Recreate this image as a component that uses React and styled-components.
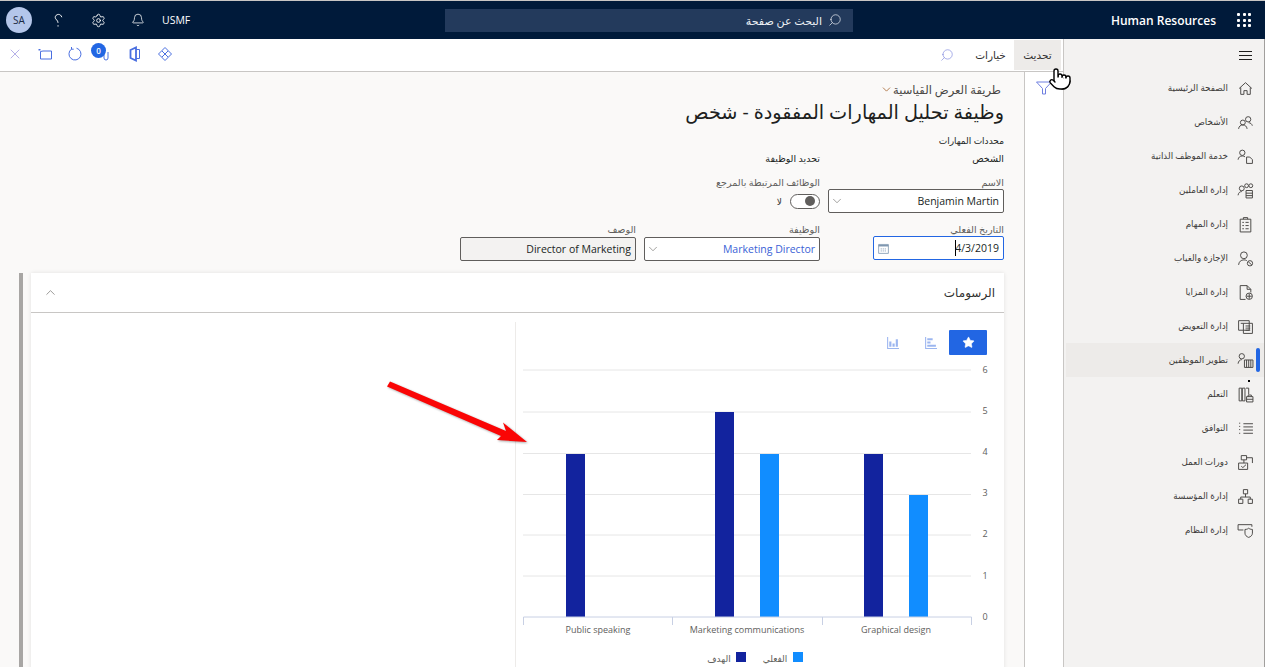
import React from 'react'
import styled, { createGlobalStyle } from 'styled-components'
import { Pointer, ChevronDown, ChevronUp, Bell, Settings, X, Search, Star } from 'lucide-react'

const FONT = `"Open Sans", "DejaVu Sans", sans-serif`

const Global = createGlobalStyle`
  html, body { margin: 0; padding: 0; height: 667px; overflow: hidden; background: #faf9f8; }
  * { box-sizing: border-box; }
  body { font-family: ${FONT}; color: #323130; }
`

const Page = styled.div`
  position: relative;
  width: 1265px;
  height: 667px;
  overflow: hidden;
  display: flex;
  flex-direction: column;
  border-top: 1px solid #c8c6c4;
`

const TopBar = styled.header`
  height: 38px;
  flex: none;
  background: #001a3a;
  color: #fff;
  display: grid;
  grid-template-columns: 412px 408px 1fr;
  align-items: center;
`

const Brand = styled.div`
  display: flex;
  align-items: center;
  gap: 21px;
  padding-right: 14px;
  font-size: 12px;
  font-weight: 600;
  direction: rtl;
`

const Dots = styled.div`
  width: 14px;
  height: 14px;
  display: grid;
  grid-template-columns: repeat(3, 3px);
  grid-auto-rows: 3px;
  justify-content: space-between;
  align-content: space-between;
  span { background: #fff; border-radius: 1px; }
`

const SearchBox = styled.div`
  height: 23px;
  background: #233a5c;
  display: flex;
  align-items: center;
  gap: 6px;
  padding-right: 11px;
  font-size: 11px;
  color: #eef1f6;
`

const MirrorSearch = styled(Search)`
  transform: scaleX(-1);
`

const TopTools = styled.div`
  display: flex;
  align-items: center;
  justify-content: flex-end;
  padding-left: 6px;
`

const Company = styled.span`
  font-size: 10.5px;
  font-weight: 500;
  margin-left: 4px;
  margin-right: 60px;
`

const TopIcon = styled.span`
  width: 40px;
  display: flex;
  justify-content: center;
`

const Avatar = styled.span`
  width: 26px;
  height: 26px;
  margin-right: 6px;
  border-radius: 50%;
  background: #b4c6ea;
  color: #1b2a44;
  font-size: 10px;
  display: flex;
  align-items: center;
  justify-content: center;
`

const Body = styled.div`
  flex: 1;
  min-height: 0;
  display: flex;
`

const SideNav = styled.nav`
  width: 202px;
  flex: none;
  background: #f3f2f1;
  border-left: 1px solid #c8c6c4;
  border-right: 1px solid #a19f9d;
`

const Burger = styled.div`
  height: 32px;
  display: flex;
  flex-direction: column;
  justify-content: center;
  gap: 3px;
  padding-right: 12px;
  span { display: block; width: 13px; height: 1px; background: #201f1e; }
`

const NavItem = styled.div`
  position: relative;
  height: 34px;
  margin-left: 2px;
  display: flex;
  align-items: center;
  gap: 9px;
  padding-right: 10px;
  font-size: 8.8px;
  color: #3b3a39;
  background: ${p => (p.$active ? '#edebe9' : 'transparent')};
  svg { width: 17px; height: 17px; flex: none; }
`

const ActiveBar = styled.span`
  position: absolute;
  right: 4px;
  top: 5px;
  width: 4px;
  height: 24px;
  border-radius: 2px;
  background: #2266e3;
`

const Stray = styled.span`
  position: absolute;
  left: 182px;
  bottom: -5px;
  width: 2px;
  height: 2px;
  background: #000;
`

const Main = styled.div`
  flex: 1;
  min-width: 0;
  display: flex;
  flex-direction: column;
`

const ActionBar = styled.div`
  height: 33px;
  flex: none;
  background: #fff;
  border-bottom: 1px solid #c8c6c4;
  display: flex;
  align-items: center;
  padding-right: 2px;
  font-size: 10.5px;
`

const ActionButton = styled.button`
  height: 30px;
  width: ${p => p.$w}px;
  border: 0;
  padding: 0;
  background: ${p => (p.$on ? '#edebe9' : 'transparent')};
  font: inherit;
  color: #323130;
`

const SearchAction = styled.span`
  display: flex;
  margin-right: 13px;
  color: #7a83dc;
`

const ActionIcons = styled.div`
  margin-right: auto;
  display: flex;
  align-self: flex-start;
  color: #4a6fe0;
`

const ActionIcon = styled.span`
  position: relative;
  width: 30px;
  height: 30px;
  display: flex;
  align-items: center;
  justify-content: center;
  color: ${p => p.$tint || 'inherit'};
  svg { width: 16px; height: 16px; }
`

const Badge = styled.span`
  position: absolute;
  top: 4px;
  left: 1px;
  width: 15px;
  height: 15px;
  border-radius: 50%;
  background: #2266e3;
  color: #fff;
  font-size: 8px;
  font-weight: 600;
  display: flex;
  align-items: center;
  justify-content: center;
`

const Work = styled.div`
  flex: 1;
  min-height: 0;
  display: flex;
`

const FilterStrip = styled.div`
  width: 39px;
  flex: none;
  background: #fff;
  border-left: 1px solid #c8c6c4;
  display: flex;
  justify-content: center;
  padding-top: 8px;
  color: #6f7fe0;
`

const Content = styled.main`
  flex: 1;
  min-width: 0;
  padding: 10px 20px 0 0;
  background: #faf9f8;
`

const Caption = styled.div`
  display: flex;
  align-items: center;
  gap: 0;
  height: 14px;
  padding-right: 3px;
  font-size: 11.5px;
  color: #484644;
  svg { color: #a4622c; }
`

const Title = styled.h1`
  margin: 3px 0 0;
  height: 26px;
  line-height: 26px;
  font-size: 19.25px;
  font-weight: 400;
  color: #201f1e;
`

const Section = styled.div`
  margin-top: 9px;
  height: 14px;
  line-height: 14px;
  font-size: 9px;
  color: #201f1e;
`

const FormGrid = styled.div`
  margin-top: 4px;
  display: grid;
  grid-template-columns: repeat(3, 176px);
  column-gap: 8px;
  row-gap: 10px;
`

const GroupHead = styled.div`
  grid-column: ${p => p.$col};
  height: 14px;
  line-height: 14px;
  font-size: 9.5px;
  color: #201f1e;
`

const Field = styled.div`
  grid-column: ${p => p.$col};
`

const Label = styled.div`
  height: ${p => (p.$tall ? 14 : 13)}px;
  line-height: 13px;
  font-size: 9.6px;
  color: #605e5c;
`

const Input = styled.div`
  height: 24px;
  width: ${p => p.$w || '100%'};
  border: 1px solid ${p => (p.$focus ? '#2266e3' : '#605e5c')};
  border-radius: 2px;
  background: ${p => (p.$ro ? '#f3f2f1' : '#fff')};
  display: flex;
  align-items: center;
  justify-content: space-between;
  padding: 0 4px 0 1px;
  direction: rtl;
  font-size: 10.5px;
  color: ${p => (p.$link ? '#3a5fd6' : '#201f1e')};
  svg.cal { color: #7f97b0; margin-left: 2px; }
`

const Caret = styled.span`
  display: inline-block;
  width: 1px;
  height: 16px;
  background: #000;
  margin-right: -1px;
`

const DateText = styled.span`
  direction: ltr;
  display: flex;
  align-items: center;
`

const ToggleRow = styled.div`
  height: 24px;
  display: flex;
  align-items: center;
  gap: 8px;
  font-size: 9px;
`

const Toggle = styled.span`
  width: 30px;
  height: 15px;
  border: 1px solid #605e5c;
  border-radius: 8px;
  background: #fff;
  display: flex;
  align-items: center;
  justify-content: flex-start;
  padding: 0 3px;
  i { width: 10px; height: 10px; border-radius: 50%; background: #605e5c; margin-right: 1px; }
`

const CardRow = styled.div`
  margin-top: 12px;
  display: flex;
  gap: 8px;
  height: 400px;
`

const ScrollThumb = styled.div`
  width: 4px;
  flex: none;
  background: #a8a6a4;
`

const Card = styled.section`
  width: 973px;
  flex: none;
  background: #fff;
  box-shadow: 0 0 4px rgba(0, 0, 0, .1);
`

const CardHead = styled.div`
  height: 40px;
  border-bottom: 1px solid #c8c6c4;
  display: flex;
  align-items: center;
  justify-content: space-between;
  padding: 0 9px 0 12px;
  font-size: 12px;
  color: #323130;
  svg { color: #605e5c; }
`

const CardBody = styled.div`
  display: flex;
  padding-top: 9px;
`

const ChartPanel = styled.div`
  width: 481px;
  margin-right: 8px;
  padding-top: 8px;
  border-left: 1px solid #edebe9;
`

const ChartTools = styled.div`
  height: 25px;
  display: flex;
  padding-right: 9px;
`

const ChartTool = styled.span`
  width: 38px;
  height: 25px;
  display: flex;
  align-items: center;
  justify-content: center;
  background: ${p => (p.$on ? '#2266e3' : 'transparent')};
  color: ${p => (p.$on ? '#fff' : '#5c86e6')};
  border-radius: 1px;
`

const ChartSvg = styled.svg`
  display: block;
  direction: ltr;
  font-family: ${FONT};
  font-size: 9px;
  fill: #605e5c;
`

const ArrowOverlay = styled.svg`
  position: absolute;
  left: 380px;
  top: 372px;
  filter: drop-shadow(1px 1px 1px rgba(0, 0, 0, .35));
`

const HandCursor = styled.span`
  position: absolute;
  left: 1048px;
  top: 66px;
  display: flex;
`

const LineIcon = ({ children, size = 16, className }) => (
  <svg className={className} width={size} height={size} viewBox="0 0 16 16" fill="none" stroke="currentColor" strokeWidth="1">{children}</svg>
)

const NAV = [
  { t: 'الصفحة الرئيسية', i: <><path d="M2 8 8 2.500 14 8" /><path d="M3.500 7v6.500h3V10h3v3.500h3V7" /></> },
  { t: 'الأشخاص', i: <><circle cx="10.500" cy="5" r="2.500" /><circle cx="5.500" cy="8" r="2.300" /><path d="M1.500 14c.3-2.500 2-3.700 4-3.700s3.700 1.200 4 3.700M11 8.200c1.800.1 3 1.200 3.400 2.800" /></> },
  { t: 'خدمة الموظف الذاتية', i: <><circle cx="5" cy="4.500" r="2.500" /><path d="M1 11c.3-2.200 1.800-3.500 4-3.500 1 0 1.800.3 2.500.8" /><path d="M9 8.500h3l2.500 2.500v3.500H9z" /></> },
  { t: 'إدارة العاملين', i: <><circle cx="4.500" cy="6" r="2.300" /><circle cx="9" cy="3.500" r="1.800" /><circle cx="13" cy="3.500" r="1.800" /><path d="M1 12.500c.3-2.300 1.700-3.500 3.500-3.500M8.500 8h6v7h-6zM8.500 10.500h6M8.500 12.800h6" /></> },
  { t: 'إدارة المهام', i: <><path d="M3 3h10v12H3zM6 3V1.500h4V3" /><path d="M5 6h1.500M8 6h3M5 9h1.500M8 9h3M5 12h1.500M8 12h3" /></> },
  { t: 'الإجازة والغياب', i: <><circle cx="6.500" cy="5" r="3.200" /><path d="M1.500 14c.3-3 2.200-4.700 5-4.700 1 0 2 .2 2.700.7" /><circle cx="12.200" cy="12.500" r="2.500" /><path d="m10.500 11 3.400 3" /></> },
  { t: 'إدارة المزايا', i: <><path d="M3 1.500h6.500L13 5v3M3 1.500v13h5" /><path d="M9.500 1.500V5H13" /><circle cx="11.500" cy="11.500" r="3" /><path d="M9 11.500h5M11.500 9v5" /></> },
  { t: 'إدارة التعويض', i: <><path d="M1.500 2.500h10v9h-10zM6 5h8.500v9.500H6z" /><path d="M8 7.500h4.500M8 9.500h4.500M8 11.500h4.500M3.500 5H6" /></> },
  { t: 'تطوير الموظفين', active: true, i: <><circle cx="4.500" cy="4" r="2.500" /><path d="M1 11c.3-2.300 1.700-3.800 3.500-3.800" /><path d="M7 7.500h8v7H7zM9 7.500v7M11 7.500v7M13 7.500v7" /></> },
  { t: 'التعلم', i: <><path d="M2 2h2.500v12H2zM5 2h2.500v12H5zM8.500 2h2.500v6" /><path d="M9 10h6v5H9zM9 12.500h6M10.500 10V8.500h3V10" /></> },
  { t: 'التوافق', i: <><path d="M6 3.500h9M6 6.500h9M6 9.500h9M6 12.500h9" /><path d="M2 3h2M2 6h2M2 9h2M2 12.500h2" strokeDasharray="1 1" /></> },
  { t: 'دورات العمل', i: <><path d="M1.500 8.500h8.500v6H1.500zM4 5.500h5V1.500H4zM6.500 5.500v3M9 3.500h5.500v5" /><path d="m4 11.500 1.500 1.300L8.500 10" /></> },
  { t: 'إدارة المؤسسة', i: <><path d="M6 1.500h4v4H6zM1.500 10.500h4v4h-4zM10.500 10.500h4v4h-4z" /><path d="M8 5.500v3M3.500 10.500v-2h9v2" /></> },
  { t: 'إدارة النظام', i: <><path d="M1 2.500h13v2M1 2.500v5h5" /><path d="M7.500 7c1.800 0 3-.6 3.500-1.200.6.6 1.800 1.200 3.500 1.200v3.500c0 2-1.500 3.300-3.500 4-2-.7-3.500-2-3.500-4z" /></> },
]

const GRID_YS = [370, 412, 453.5, 494.5, 535, 576]
const BARS = [
  { x: 566, y: 454, c: '#12239e' },
  { x: 715, y: 412, c: '#12239e' },
  { x: 760, y: 454, c: '#118dff' },
  { x: 864, y: 454, c: '#12239e' },
  { x: 909, y: 495, c: '#118dff' },
]
const LABELS = [[598, 'Public speaking'], [747, 'Marketing communications'], [896, 'Graphical design']]

export default function App() {
  return (
    <Page dir="rtl">
      <Global />
      <TopBar>
        <Brand>
          <Dots>{Array.from({ length: 9 }, (_, i) => <span key={i} />)}</Dots>
          <span>Human Resources</span>
        </Brand>
        <SearchBox>
          <MirrorSearch size={14} strokeWidth={1.2} />
          <span>البحث عن صفحة</span>
        </SearchBox>
        <TopTools>
          <Company>USMF</Company>
          <TopIcon><Bell size={14} strokeWidth={1.3} /></TopIcon>
          <TopIcon><Settings size={15} strokeWidth={1.4} /></TopIcon>
          <TopIcon>
            <LineIcon size={15}>
              <path d="M11.500 4.500C11 2.500 9.500 1.500 8 1.500 6 1.500 4.500 3 4.500 4.700c0 2.300 3 2.800 3 5.800" />
              <path d="M7.500 13v1.500" />
            </LineIcon>
          </TopIcon>
          <Avatar>SA</Avatar>
        </TopTools>
      </TopBar>

      <Body>
        <SideNav>
          <Burger><span /><span /><span /></Burger>
          <div>
            {NAV.map(n => (
              <NavItem key={n.t} $active={n.active}>
                <svg viewBox="0 0 16 16" fill="none" stroke="#484644" strokeWidth=".9">{n.i}</svg>
                <span>{n.t}</span>
                {n.active && <ActiveBar />}
                {n.active && <Stray />}
              </NavItem>
            ))}
          </div>
        </SideNav>

        <Main>
          <ActionBar>
            <ActionButton $w={47} $on>تحديث</ActionButton>
            <ActionButton $w={47}>خيارات</ActionButton>
            <SearchAction><MirrorSearch size={14} strokeWidth={1.1} /></SearchAction>
            <ActionIcons>
              <ActionIcon>
                <LineIcon><path d="M8 1.500 14.500 8 8 14.500 1.500 8zM5 5l6 6M11 5l-6 6" /></LineIcon>
              </ActionIcon>
              <ActionIcon>
                <LineIcon>
                  <path d="M3.500 4 9 1.500v13L3.500 12z" strokeWidth="1.800" />
                  <path d="M9 3.500h3.500v9H9" />
                </LineIcon>
              </ActionIcon>
              <ActionIcon>
                <LineIcon><path d="M11 6v6a2 2 0 0 1-4 0V5" /></LineIcon>
                <Badge>0</Badge>
              </ActionIcon>
              <ActionIcon>
                <LineIcon>
                  <path d="M9.500 2.200A6 6 0 1 1 4.500 3.100" />
                  <path d="M4.500 1v2.200h2.200" />
                </LineIcon>
              </ActionIcon>
              <ActionIcon>
                <LineIcon>
                  <path d="M3.500 5.500 6 5h8.500v8h-11z" />
                  <path d="M1.500 3h2v1.500h-2z" fill="currentColor" stroke="none" />
                </LineIcon>
              </ActionIcon>
              <ActionIcon $tint="#8f86dd"><X strokeWidth={1} /></ActionIcon>
            </ActionIcons>
          </ActionBar>

          <Work>
            <FilterStrip>
              <LineIcon size={16}><path d="M.500 2h15L9.500 8.500V14h-3V8.500z" /></LineIcon>
            </FilterStrip>
            <Content>
              <Caption>
                <span>طريقة العرض القياسية</span>
                <ChevronDown size={13} strokeWidth={1.5} />
              </Caption>
              <Title>وظيفة تحليل المهارات المفقودة - شخص</Title>
              <Section>محددات المهارات</Section>
              <FormGrid>
                <GroupHead $col={1}>الشخص</GroupHead>
                <GroupHead $col={2}>تحديد الوظيفة</GroupHead>
                <Field $col={1}>
                  <Label>الاسم</Label>
                  <Input>
                    <span>Benjamin Martin</span>
                    <ChevronDown size={14} strokeWidth={1} color="#605e5c" />
                  </Input>
                </Field>
                <Field $col={2}>
                  <Label>الوظائف المرتبطة بالمرجع</Label>
                  <ToggleRow>
                    <Toggle><i /></Toggle>
                    <span>لا</span>
                  </ToggleRow>
                </Field>
                <Field $col={1}>
                  <Label>التاريخ الفعلي</Label>
                  <Input $focus $w="131px">
                    <DateText><Caret />4/3/2019</DateText>
                    <LineIcon className="cal" size={13}>
                      <path d="M2 3h12v11H2z" />
                      <path d="M2 4.500h12" strokeWidth="2" />
                      <path d="M4.500 8.500h7M4.500 11h7" strokeDasharray="1.500 1" />
                    </LineIcon>
                  </Input>
                </Field>
                <Field $col={2}>
                  <Label $tall>الوظيفة</Label>
                  <Input $link>
                    <span>Marketing Director</span>
                    <ChevronDown size={14} strokeWidth={1} color="#605e5c" />
                  </Input>
                </Field>
                <Field $col={3}>
                  <Label $tall>الوصف</Label>
                  <Input $ro><span>Director of Marketing</span></Input>
                </Field>
              </FormGrid>

              <CardRow>
                <Card>
                  <CardHead>
                    <span>الرسومات</span>
                    <ChevronUp size={15} strokeWidth={1} />
                  </CardHead>
                  <CardBody>
                    <ChartPanel>
                      <ChartTools>
                        <ChartTool $on><Star size={13} fill="#fff" strokeWidth={1} /></ChartTool>
                        <ChartTool>
                          <svg width="13" height="13" viewBox="0 0 12 12" fill="currentColor" opacity=".6"><path d="M1 1h1v10h10v1H1zM3 2h5v2H3zM3 5h3v2H3zM3 8h8v2H3z" /></svg>
                        </ChartTool>
                        <ChartTool>
                          <svg width="13" height="13" viewBox="0 0 12 12" fill="currentColor" opacity=".6"><path d="M1 1h1v10h10v1H1zM3 5h2v5H3zM6 7h2v3H6zM9 3h2v7H9z" /></svg>
                        </ChartTool>
                      </ChartTools>
                      <ChartSvg width="480" height="312" viewBox="516 355 480 312">
                        {GRID_YS.map(y => <line key={y} x1="523" x2="971" y1={y} y2={y} stroke="#e6e6e6" />)}
                        {[6, 5, 4, 3, 2, 1, 0].map((v, i) => (
                          <text key={v} x="985" y={372.5 + i * 41.2} textAnchor="middle">{v}</text>
                        ))}
                        {BARS.map(b => <rect key={b.x} x={b.x} y={b.y} width="19" height={617 - b.y} fill={b.c} />)}
                        <path d="M523.500 625v-8h448v8M672.500 617v8M822.500 617v8" fill="none" stroke="#c8d0e4" />
                        {LABELS.map(([x, t]) => <text key={t} x={x} y="633" textAnchor="middle">{t}</text>)}
                        <rect x="793" y="652" width="10" height="10" fill="#118dff" />
                        <text x="775" y="662" textAnchor="middle">الفعلي</text>
                        <rect x="736" y="652" width="10" height="10" fill="#12239e" />
                        <text x="719" y="662" textAnchor="middle">الهدف</text>
                      </ChartSvg>
                    </ChartPanel>
                  </CardBody>
                </Card>
                <ScrollThumb />
              </CardRow>
            </Content>
          </Work>
        </Main>
      </Body>

      <ArrowOverlay width="160" height="80" viewBox="380 372 160 80">
        <path d="M390 380.500 506 430 503 421.500 527 441 497 439 501 435 387 385.500z" fill="#fa0505" />
      </ArrowOverlay>
      <HandCursor><Pointer size={24} fill="#fff" strokeWidth={1.4} color="#000" /></HandCursor>
    </Page>
  )
}
